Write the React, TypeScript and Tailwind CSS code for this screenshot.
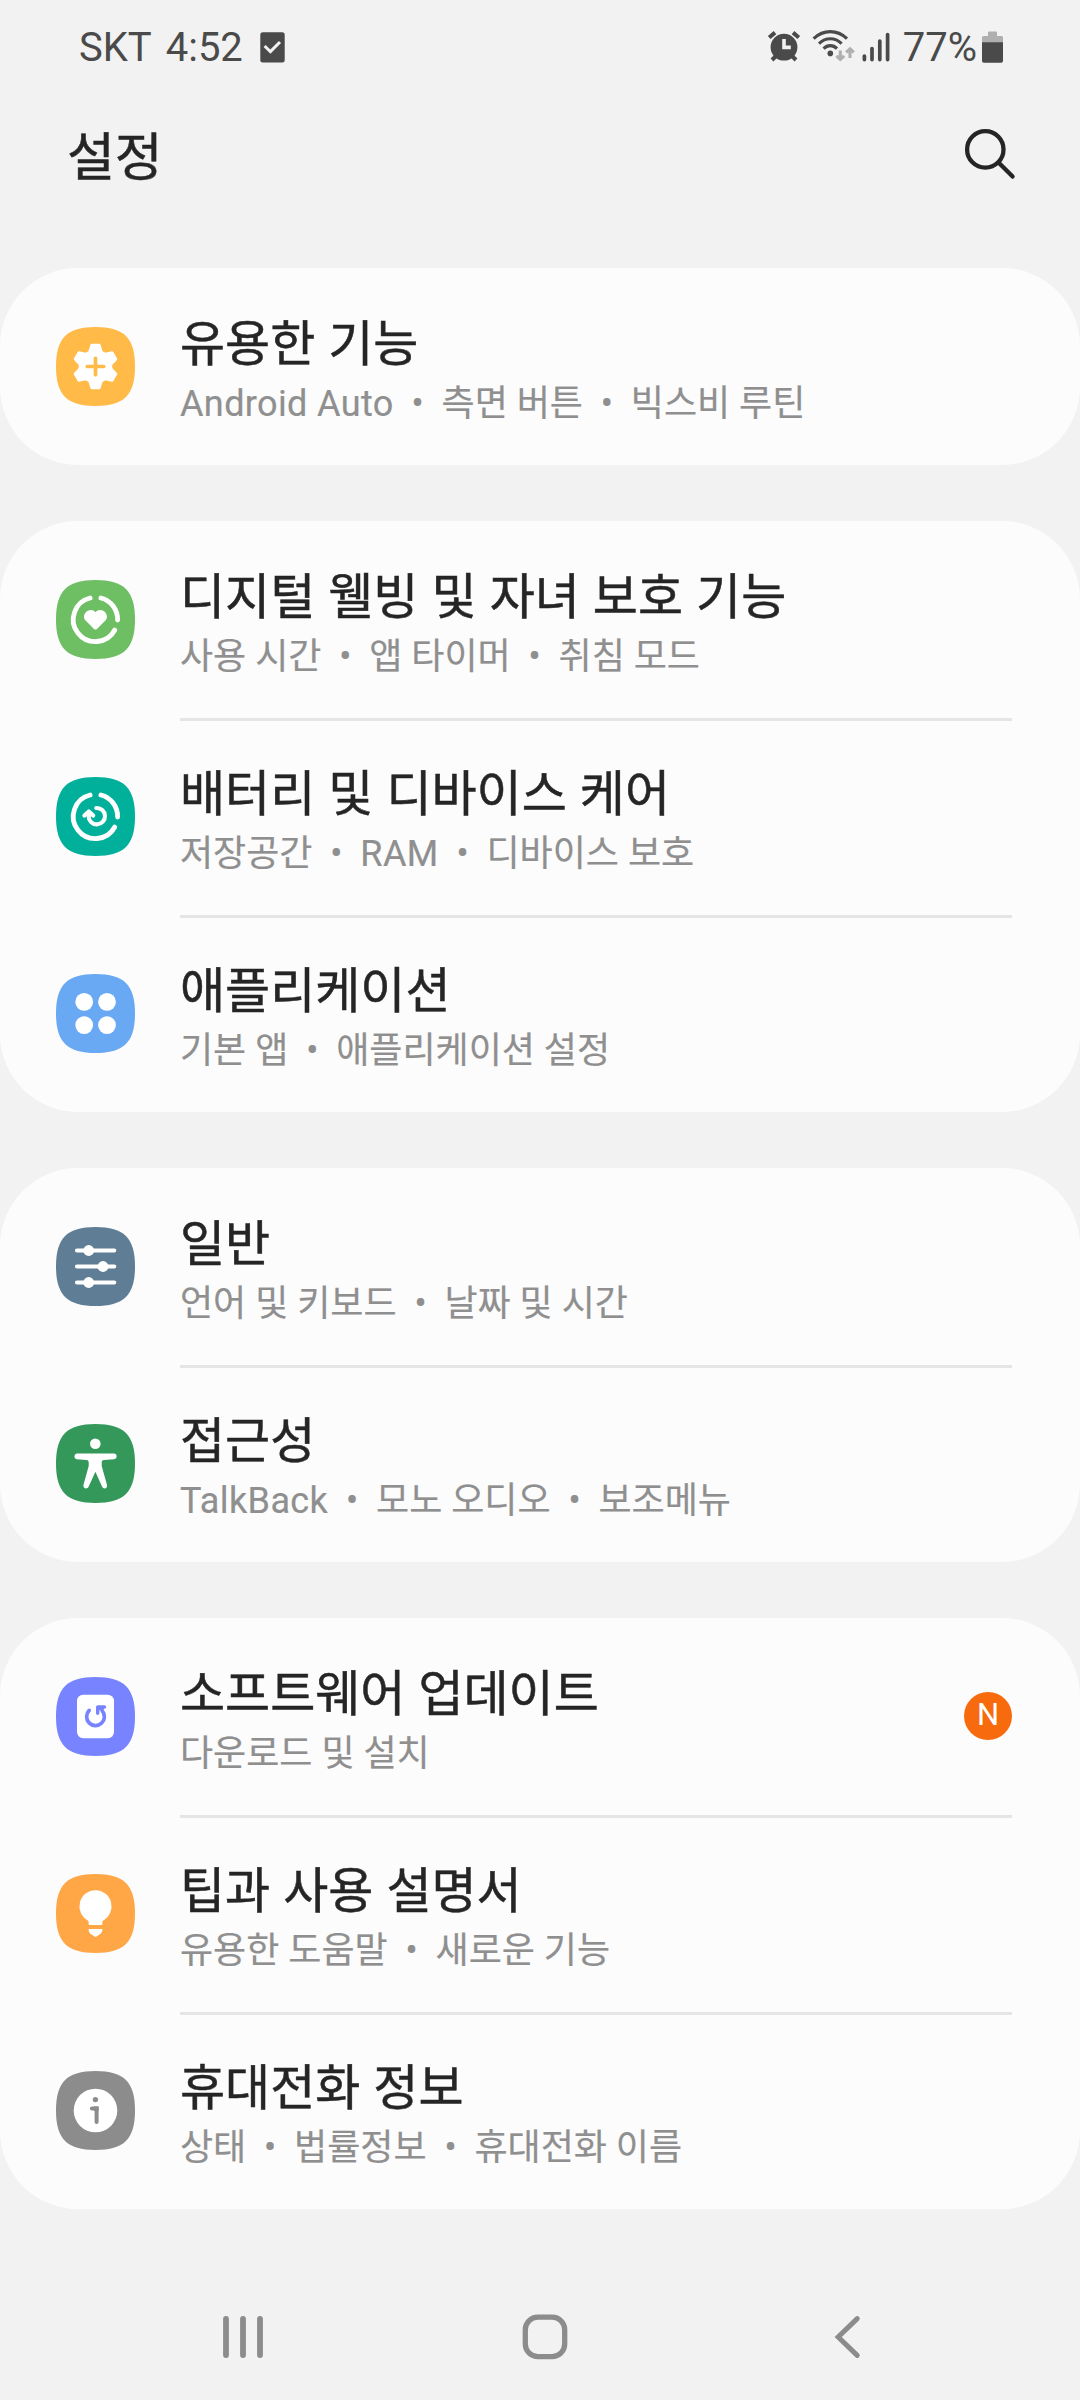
import type { ReactNode } from "react";

type Item = {
  title: string;
  sub: ReactNode;
  color: string;
  glyph: ReactNode;
  badge?: string;
};

const ring = (
  <g fill="none" stroke="#fff" strokeWidth="4.8" strokeLinecap="round">
    <path d="M44.9 18A22.1 22.1 0 0 1 61.6 40" />
    <path d="M58.8 50A22.1 22.1 0 1 1 34.1 18" />
  </g>
);

const gear = (
  <>
    <circle cx="39.5" cy="39.5" r="16.8" fill="#fff" />
    {[0, 60, 120, 180, 240, 300].map((a) => (
      <path
        key={a}
        d="M32.8 27L35.6 18H43.4L46.2 27Z"
        transform={`rotate(${a} 39.5 39.5)`}
        fill="#fff"
        stroke="#fff"
        strokeWidth="2.4"
        strokeLinejoin="round"
      />
    ))}
    <path d="M39.5 31.3V47.7M31.3 39.5H47.7" stroke="#ffba47" strokeWidth="3.7" strokeLinecap="round" />
  </>
);

const heart = (
  <>
    {ring}
    <path
      fill="#fff"
      d="M39.5 32.2C37.6 29.6 34.6 29.5 32.4 30.4C28 32.3 26.7 37.4 29.6 40.6L38 48.9Q39.5 50.3 41 48.9L49.4 40.6C52.3 37.4 51 32.3 46.6 30.4C44.4 29.5 41.4 29.6 39.5 32.2Z"
    />
  </>
);

const care = (
  <>
    {ring}
    <g fill="none" stroke="#fff" strokeWidth="4.1" strokeLinecap="round" strokeLinejoin="round">
      <path d="M40.3 31A8.2 8.2 0 1 1 32.6 39.4V36" />
      <path d="M28.4 38.6L32.8 34.5L37.2 38.6" />
    </g>
  </>
);

const apps = (
  <g fill="#fff">
    <circle cx="28.2" cy="27.9" r="8.9" />
    <circle cx="51" cy="27.9" r="8.9" />
    <circle cx="28.2" cy="51.1" r="8.9" />
    <circle cx="51" cy="51.1" r="8.9" />
  </g>
);

const sliders = (
  <>
    <path d="M20.9 23.5H58.3M20.9 39.5H58.3M20.9 55.5H58.3" stroke="#fff" strokeWidth="4" strokeLinecap="round" />
    <g fill="#fff">
      <circle cx="32.7" cy="23.5" r="5.4" />
      <circle cx="47" cy="39.5" r="5.4" />
      <circle cx="32.7" cy="55.5" r="5.4" />
    </g>
  </>
);

const person = (
  <g fill="#fff">
    <circle cx="39.3" cy="19.7" r="5.3" />
    <path d="M21.2 29.5H57.8C61.6 29.5 61.6 34.9 58 35.2L48 36C46.2 36.2 45.6 37 45.7 38.8V42L51 61C51.8 64.8 47.4 65.8 46 62.6L39.4 47.8L32.6 62.8C31 65.8 26.6 64.4 27.5 60.8L32.7 42V38.8C32.8 37 32 36.2 30.4 36L20.6 35.2C17.6 34.7 17.8 29.6 21.2 29.5Z" />
  </g>
);

const update = (
  <>
    <rect x="21" y="17.7" width="37" height="43.6" rx="6.2" fill="#fff" />
    <g fill="none" stroke="#7883ff" strokeWidth="3.7" strokeLinecap="round">
      <path d="M33.2 33.4A8.9 8.9 0 1 0 46.2 33.8" />
      <path d="M41.7 36.2V30H48.5" strokeWidth="3.4" strokeLinejoin="round" />
    </g>
    <path d="M42 30H49L46.5 34L43 33Z" fill="#7883ff" />
  </>
);

const bulb = (
  <g fill="#fff">
    <path d="M39.5 16.2A16.1 16.1 0 0 1 47.2 46.4L46.4 47.5V50Q46.4 51 45.4 51H33.6Q32.6 51 32.6 50V47.5L31.8 46.4A16.1 16.1 0 0 1 39.5 16.2Z" />
    <path d="M32.7 55H46.3V56.6Q46.3 58.2 45 59.2L41 62.2Q39.5 63.3 38 62.2L34 59.2Q32.7 58.2 32.7 56.6Z" />
  </g>
);

const info = (
  <>
    <circle cx="39.5" cy="39.5" r="21.8" fill="#fff" />
    <circle cx="39.4" cy="28.6" r="2.7" fill="#8c8c8c" />
    <path d="M35.9 37.4H40.6V51" fill="none" stroke="#8c8c8c" strokeWidth="4" strokeLinecap="round" />
    <path d="M38 35.4H42.6V40H38Z" fill="#8c8c8c" />
  </>
);

function Latin({ children }: { children: string }) {
  return <span className="tracking-[0.38px]">{children}</span>;
}

const groups: Item[][] = [
  [
    {
      title: "유용한 기능",
      sub: (
        <>
          <Latin>Android Auto</Latin>
          {"  •  측면 버튼  •  빅스비 루틴"}
        </>
      ),
      color: "#ffba47",
      glyph: gear,
    },
  ],
  [
    { title: "디지털 웰빙 및 자녀 보호 기능", sub: "사용 시간  •  앱 타이머  •  취침 모드", color: "#6ebe64", glyph: heart },
    {
      title: "배터리 및 디바이스 케어",
      sub: (
        <>
          {"저장공간  •  "}
          <Latin>RAM</Latin>
          {"  •  디바이스 보호"}
        </>
      ),
      color: "#00b09b",
      glyph: care,
    },
    { title: "애플리케이션", sub: "기본 앱  •  애플리케이션 설정", color: "#69a8f3", glyph: apps },
  ],
  [
    { title: "일반", sub: "언어 및 키보드  •  날짜 및 시간", color: "#5f7e96", glyph: sliders },
    {
      title: "접근성",
      sub: (
        <>
          <Latin>TalkBack</Latin>
          {"  •  모노 오디오  •  보조메뉴"}
        </>
      ),
      color: "#34985b",
      glyph: person,
    },
  ],
  [
    { title: "소프트웨어 업데이트", sub: "다운로드 및 설치", color: "#7883ff", glyph: update, badge: "N" },
    { title: "팁과 사용 설명서", sub: "유용한 도움말  •  새로운 기능", color: "#ffa747", glyph: bulb },
    { title: "휴대전화 정보", sub: "상태  •  법률정보  •  휴대전화 이름", color: "#8c8c8c", glyph: info },
  ],
];

function Row({ item }: { item: Item }) {
  return (
    <div className="flex h-[197px] items-center pr-[68px] pl-14">
      <svg className="size-[79px] shrink-0" viewBox="0 0 79 79">
        <path fill={item.color} d="M0 39.5C0 11 11 0 39.5 0S79 11 79 39.5 68 79 39.5 79 0 68 0 39.5Z" />
        {item.glyph}
      </svg>
      <div className="ml-[45px] flex h-full flex-1 flex-col pt-12 whitespace-pre">
        <div className="text-[49px] leading-[58px] text-[#252525] [-webkit-text-stroke:0.5px_#252525] [word-spacing:0.9px]">
          {item.title}
        </div>
        <div className="mt-[9px] text-[36px] leading-[42px] text-[#8f8f8f] [-webkit-text-stroke:0.2px_#8f8f8f]">
          {item.sub}
        </div>
      </div>
      {item.badge && (
        <div className="-mt-px flex size-12 items-center justify-center rounded-full bg-[#f76b0e] pb-1 text-[31px] leading-none text-white">
          {item.badge}
        </div>
      )}
    </div>
  );
}

function StatusBar() {
  return (
    <div className="flex h-[94px] items-center pr-[77px] pl-[79px] text-[40px] leading-[47px] text-[#4a4a4a]">
      <span>SKT</span>
      <span className="ml-[14px]">4:52</span>
      <svg className="ml-[17px] h-[31px] w-[25px]" viewBox="0 0 25 31">
        <rect x="0.3" y="0.3" width="24.4" height="30.2" rx="2.5" fill="#4a4a4a" />
        <path d="M4.6 14L10.4 19.6L20 10" fill="none" stroke="#f2f2f2" strokeWidth="3" />
      </svg>
      <svg className="ml-auto h-[34px] w-[34px]" viewBox="767 29 34 34" fill="none" stroke="#4a4a4a">
        <circle cx="784" cy="46.2" r="13.4" fill="#4a4a4a" stroke="none" />
        <path d="M769.2 36.5L775 31.6M798.8 36.5L793 31.6" strokeWidth="4" />
        <path d="M772 59L776 55M796 59L792 55" strokeWidth="4" />
        <path d="M784 38V46.4H790.8" stroke="#f2f2f2" strokeWidth="3.6" />
      </svg>
      <svg className="ml-[11px] h-[34px] w-[43px]" viewBox="812 29 43 34" fill="none" stroke="#4a4a4a" strokeWidth="3.1">
        <path d="M813.6 37.6Q821 30.6 830.3 30.6T847 37.6" />
        <path d="M819 42.6Q824 37.8 830.3 37.8T841.6 42.6" />
        <path d="M823.6 47.6Q826.5 44.6 830.3 44.6T837 47.6" />
        <circle cx="830.3" cy="52.4" r="2.8" fill="#4a4a4a" stroke="none" />
        <path d="M840.3 49.5V58M836.5 54.8L840.3 58.4L844.1 54.8M850 57V48M846.2 51.4L850 47.8L853.8 51.4" stroke="#afafaf" />
      </svg>
      <svg className="ml-[7px] h-[30px] w-[28px]" viewBox="862 31 28 30" stroke="#4a4a4a" strokeWidth="3.7" strokeLinecap="round">
        <path d="M864.4 55V58.6M872 47.6V58.6M879.8 40V58.6M887.6 33.6V58.6" />
      </svg>
      <span className="ml-[13px]">77%</span>
      <svg className="ml-[5px] h-[32px] w-[21px] shrink-0" viewBox="0 0 21 32">
        <path d="M6 5V1.4Q6 0.4 7 0.4H14Q15 0.4 15 1.4V5H19.5Q21 5 21 6.5V12H0V6.5Q0 5 1.5 5Z" fill="#afafaf" />
        <path d="M0 11.2H21V30Q21 31.8 19.2 31.8H1.8Q0 31.8 0 30Z" fill="#4a4a4a" />
      </svg>
    </div>
  );
}

export default function App() {
  return (
    <div
      lang="ko"
      className="flex h-[2400px] w-[1080px] flex-col overflow-hidden bg-[#f2f2f2] font-[Roboto,'Noto_Sans_CJK_KR',sans-serif]"
    >
      <StatusBar />
      <header className="flex h-[174px] items-start justify-between pr-[62px] pl-[67px]">
        <h1 className="mt-[34px] text-[52px] leading-[62px] text-[#252525] [-webkit-text-stroke:0.5px_#252525]">설정</h1>
        <svg className="mt-[33px] size-[54px]" viewBox="964 127 54 54" fill="none" stroke="#252525" strokeWidth="4.3" strokeLinecap="round">
          <circle cx="985.3" cy="149.4" r="18.2" />
          <path d="M999 163L1012.6 176.6" />
        </svg>
      </header>
      <main className="flex flex-col gap-14">
        {groups.map((items, g) => (
          <section key={g} className="rounded-[78px] bg-[#fcfcfc]">
            {items.map((item, i) => (
              <div key={item.title}>
                {i > 0 && <div className="mr-[68px] -mb-[3px] ml-[180px] h-[3px] bg-[#e5e5e5]" />}
                <Row item={item} />
              </div>
            ))}
          </section>
        ))}
      </main>
      <nav className="mt-[104px] flex h-12 items-center pl-[222px]">
        <svg className="h-12 w-[42px]" viewBox="222 2313 42 48" stroke="#8c8c8c" strokeWidth="5.8" strokeLinecap="round">
          <path d="M226 2318.9V2355.1M243 2318.9V2355.1M260 2318.9V2355.1" />
        </svg>
        <svg className="ml-[257px] size-12" viewBox="521 2313 48 48" fill="none" stroke="#8c8c8c" strokeWidth="5.3">
          <rect x="525.3" y="2317.2" width="39.4" height="39.4" rx="12.5" />
        </svg>
        <svg className="ml-[264px] h-12 w-[30px]" viewBox="833 2313 30 48" fill="none" stroke="#8c8c8c" strokeWidth="5" strokeLinecap="round">
          <path d="M857.2 2318.6L838.2 2337L857.2 2355.4" />
        </svg>
      </nav>
    </div>
  );
}
